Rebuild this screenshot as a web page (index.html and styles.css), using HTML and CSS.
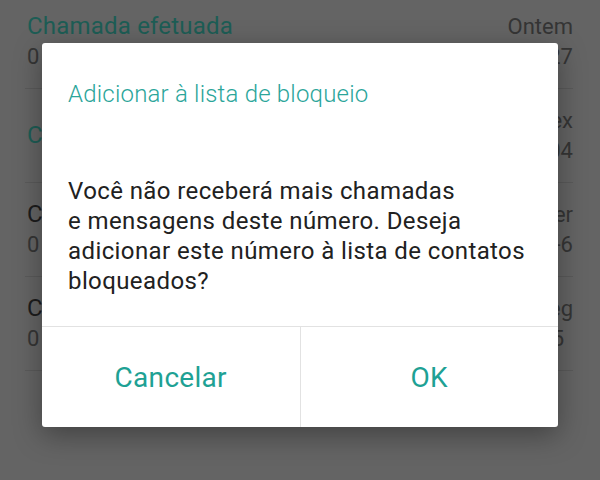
FILE: index.html
```html
<!DOCTYPE html>
<html>
  <head>
    <meta charset="UTF-8">
    <title>Bloquear número</title>
    <link rel="stylesheet" href="styles.css">
  </head>

  <body>
    <div id="screen">
      <div id="calls">
        <div class="call">
          <div class="call__main">
            <div class="call__name teal">Chamada efetuada</div>
            <div class="call__number">0 800 725 0027</div>
          </div>
          <div class="call__side">
            <div class="call__day">Ontem</div>
            <div class="call__time">19:27</div>
          </div>
        </div>
        <div class="call">
          <div class="call__main">
            <div class="call__name teal">Chamada bloqueada</div>
          </div>
          <div class="call__side">
            <div class="call__day">Sex</div>
            <div class="call__time">10:04</div>
          </div>
        </div>
        <div class="call">
          <div class="call__main">
            <div class="call__name">Claro</div>
            <div class="call__number">0 800 036 6166</div>
          </div>
          <div class="call__side">
            <div class="call__day">Ter</div>
            <div class="call__time">28-6</div>
          </div>
        </div>
        <div class="call">
          <div class="call__main">
            <div class="call__name">Central</div>
            <div class="call__number">0 800 702 1515</div>
          </div>
          <div class="call__side">
            <div class="call__day">Seg</div>
            <div class="call__time short">14:5</div>
          </div>
        </div>
      </div>

      <div id="overlay">
        <div class="dialog">
          <div class="dialog__title">Adicionar à lista de bloqueio</div>
          <div class="dialog__text">
            Você não receberá mais chamadas<br>
            e mensagens deste número. Deseja<br>
            adicionar este número à lista de contatos<br>
            bloqueados?
          </div>
          <div class="dialog__buttons">
            <button class="dialog__btn">Cancelar</button>
            <button class="dialog__btn">OK</button>
          </div>
        </div>
      </div>
    </div>
  </body>
</html>
```

FILE: styles.css
```css
* {
  font-family: Roboto, 'Noto Sans', sans-serif;
  box-sizing: border-box;
}
html, body {
  margin: 0;
  padding: 0;
  width: 100%;
  height: 100%;
  overflow: hidden;
  background: #646464;
}

#screen {
  position: relative;
  width: 600px;
  height: 480px;
  overflow: hidden;
}

#calls {
  margin-top: -5px;
}
.call {
  display: flex;
  justify-content: space-between;
  align-items: center;
  height: 94px;
  margin: 0 27px 0 25px;
  padding-left: 2px;
  border-bottom: 1px solid #5a5a5a;
}
.call__main, .call__side {
  display: flex;
  flex-direction: column;
  gap: 5px;
}
.call__side {
  align-items: flex-end;
}
.call__name {
  font-size: 24px;
  line-height: 25px;
  letter-spacing: 0.2px;
  color: #1c1c1c;
}
.call__name.teal {
  color: #1d5d55;
}
.call__number, .call__day, .call__time {
  font-size: 22px;
  line-height: 25px;
  color: #353535;
}
.call__time.short {
  margin-right: 9px;
}

#overlay {
  position: absolute;
  top: 0;
  left: 0;
  right: 0;
  bottom: 0;
  display: flex;
  justify-content: center;
  align-items: flex-start;
  padding-top: 43px;
}

.dialog {
  width: 516px;
  height: 384px;
  background: #fff;
  border-radius: 3px;
  box-shadow: 0 8px 28px rgba(0, 0, 0, 0.35);
  display: flex;
  flex-direction: column;
}
.dialog__title {
  padding: 36px 26px 0;
  font-size: 24px;
  font-weight: 300;
  line-height: 30px;
  letter-spacing: 0.2px;
  color: #2ba59a;
}
.dialog__text {
  padding: 67px 26px 0;
  font-size: 24px;
  line-height: 30px;
  letter-spacing: 0.4px;
  color: #212121;
  flex: 1;
}
.dialog__buttons {
  display: flex;
  height: 101px;
  border-top: 1px solid #e2e2e2;
}
.dialog__btn {
  flex: 1;
  border: none;
  background: none;
  font-size: 28px;
  letter-spacing: 0.3px;
  color: #1ea194;
  padding: 0;
  cursor: pointer;
}
.dialog__btn + .dialog__btn {
  border-left: 1px solid #e2e2e2;
}
```
